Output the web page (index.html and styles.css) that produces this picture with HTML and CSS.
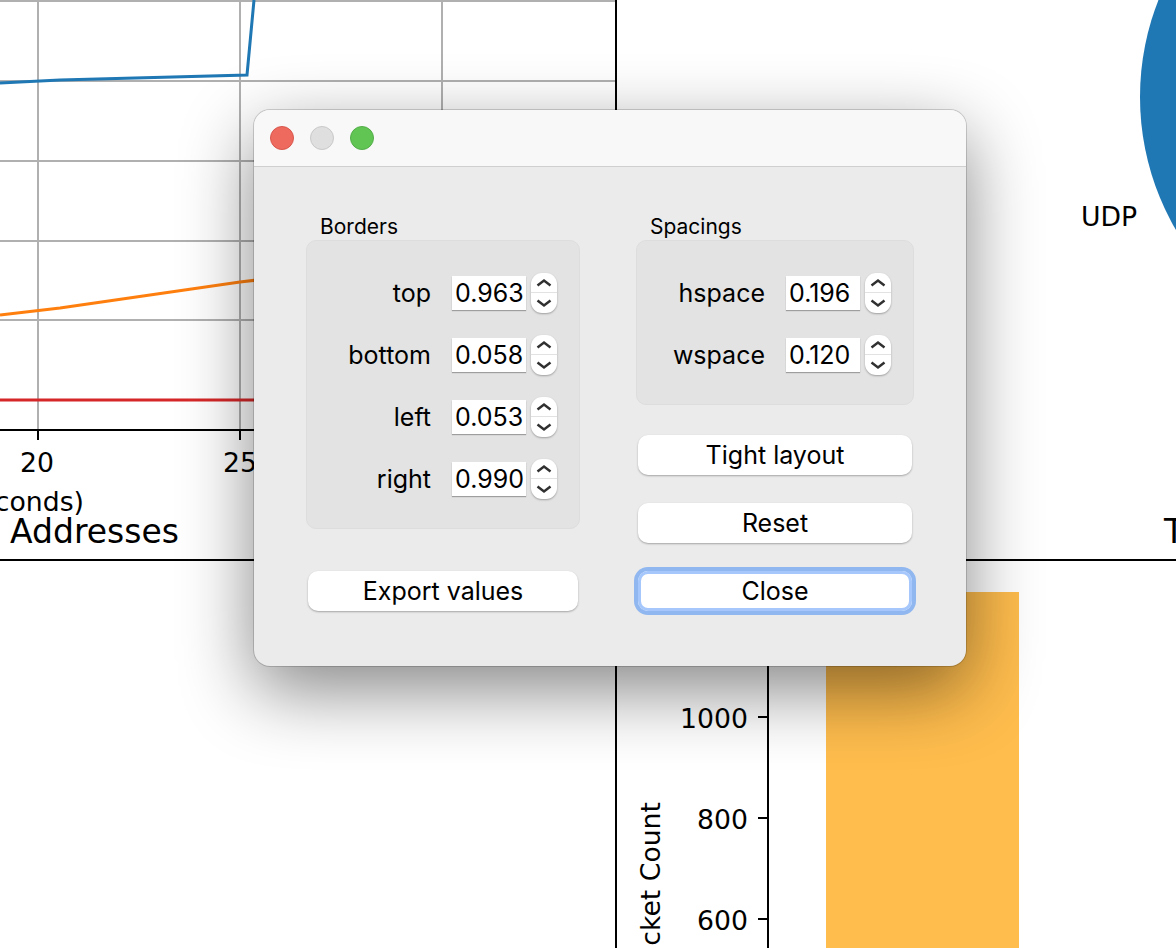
FILE: index.html
```html
<!DOCTYPE html>
<html lang="en">
<head>
    <meta charset="UTF-8">
    <meta name="viewport" content="width=device-width, initial-scale=1.0">
    <title>Subplot configuration</title>
    <link rel="stylesheet" href="styles.css">
</head>
<body>
    <!-- matplotlib figure behind the dialog -->
    <svg class="figure" width="1176" height="948" viewBox="0 0 1176 948">
        <g class="grid">
            <path d="M38 0V430M240 0V430M442 0V430"/>
            <path d="M0 1H615M0 81H615M0 161H615M0 241H615M0 320H615M0 400H615"/>
        </g>
        <polyline class="line-blue" points="0,83 60,80 247,75 254,0"/>
        <polyline class="line-orange" points="0,315 60,308 240,282 300,275"/>
        <polyline class="line-red" points="0,400 615,400"/>
        <path class="axis" d="M0 430H616M616 0V948M0 560H1176M768 560V948"/>
        <path class="axis" d="M38 430V440M240 430V440M758 717H768M758 818H768M758 919H768"/>
        <circle class="pie" cx="1404" cy="97" r="264"/>
        <rect class="bar" x="826" y="592" width="193" height="356"/>
        <text class="tick" x="37" y="472" text-anchor="middle">20</text>
        <text class="tick" x="240" y="472" text-anchor="middle">25</text>
        <text class="tick" x="84" y="511" text-anchor="end">conds)</text>
        <text class="title" x="10" y="543">Addresses</text>
        <text class="title" x="1164" y="543">T</text>
        <text class="tick" x="1081" y="226">UDP</text>
        <text class="tick" x="748" y="728" text-anchor="end">1000</text>
        <text class="tick" x="748" y="829" text-anchor="end">800</text>
        <text class="tick" x="748" y="930" text-anchor="end">600</text>
        <text class="tick" text-anchor="end" transform="translate(660,802) rotate(-90)">cket Count</text>
    </svg>

    <div class="dialog">
        <div class="titlebar">
            <span class="light light-red"></span>
            <span class="light light-grey"></span>
            <span class="light light-green"></span>
        </div>
        <div class="dialog-body">
            <div class="column">
                <div class="group-title">Borders</div>
                <div class="group group-borders">
                    <div class="row">
                        <span class="row-label">top</span>
                        <span class="spin-value">0.963</span>
                        <span class="stepper">
                            <svg width="26" height="40" viewBox="0 0 26 40"><path d="M6.5 12.5L13 7.5L19.500 12.5M6.500 27.500L13 32.500L19.500 27.500"/></svg>
                        </span>
                    </div>
                    <div class="row">
                        <span class="row-label">bottom</span>
                        <span class="spin-value">0.058</span>
                        <span class="stepper">
                            <svg width="26" height="40" viewBox="0 0 26 40"><path d="M6.5 12.5L13 7.5L19.500 12.5M6.500 27.500L13 32.500L19.500 27.500"/></svg>
                        </span>
                    </div>
                    <div class="row">
                        <span class="row-label">left</span>
                        <span class="spin-value">0.053</span>
                        <span class="stepper">
                            <svg width="26" height="40" viewBox="0 0 26 40"><path d="M6.5 12.5L13 7.5L19.500 12.5M6.500 27.500L13 32.500L19.500 27.500"/></svg>
                        </span>
                    </div>
                    <div class="row">
                        <span class="row-label">right</span>
                        <span class="spin-value">0.990</span>
                        <span class="stepper">
                            <svg width="26" height="40" viewBox="0 0 26 40"><path d="M6.5 12.5L13 7.5L19.500 12.5M6.500 27.500L13 32.500L19.500 27.500"/></svg>
                        </span>
                    </div>
                </div>
                <button class="push-button button-export">Export values</button>
            </div>
            <div class="column">
                <div class="group-title">Spacings</div>
                <div class="group">
                    <div class="row">
                        <span class="row-label">hspace</span>
                        <span class="spin-value">0.196</span>
                        <span class="stepper">
                            <svg width="26" height="40" viewBox="0 0 26 40"><path d="M6.5 12.5L13 7.5L19.500 12.5M6.500 27.500L13 32.500L19.500 27.500"/></svg>
                        </span>
                    </div>
                    <div class="row">
                        <span class="row-label">wspace</span>
                        <span class="spin-value">0.120</span>
                        <span class="stepper">
                            <svg width="26" height="40" viewBox="0 0 26 40"><path d="M6.5 12.5L13 7.5L19.500 12.5M6.500 27.500L13 32.500L19.500 27.500"/></svg>
                        </span>
                    </div>
                </div>
                <div class="button-stack">
                    <button class="push-button">Tight layout</button>
                    <button class="push-button">Reset</button>
                    <button class="push-button button-focus">Close</button>
                </div>
            </div>
        </div>
    </div>
</body>
</html>
```

FILE: styles.css
```css
body {
    margin: 0;
    width: 1176px;
    height: 948px;
    overflow: hidden;
    position: relative;
    background-color: #fff;
    font-family: Inter, "Liberation Sans", sans-serif;
    color: #000;
}

/* figure */
.figure {
    position: absolute;
    left: 0;
    top: 0;
    display: block;
}

.figure text {
    font-family: "DejaVu Sans", sans-serif;
    fill: #000;
}

.grid path {
    fill: none;
    stroke: #b0b0b0;
    stroke-width: 2;
}

.line-blue,
.line-orange,
.line-red {
    fill: none;
    stroke-width: 3;
}

.line-blue {
    stroke: #1f77b4;
}

.line-orange {
    stroke: #ff7f0e;
}

.line-red {
    stroke: #d62728;
}

.axis {
    fill: none;
    stroke: #000;
    stroke-width: 2;
}

.pie {
    fill: #1f77b4;
}

.bar {
    fill: #ffbd4d;
}

.tick {
    font-size: 26.700px;
}

.title {
    font-size: 33px;
}

/* dialog */
.dialog {
    position: absolute;
    left: 254px;
    top: 110px;
    width: 712px;
    height: 556px;
    box-sizing: border-box;
    background-color: #ebebeb;
    border-radius: 16px;
    box-shadow: 0 0 0 1px rgba(0, 0, 0, 0.16), 0 24px 72px rgba(0, 0, 0, 0.48);
    overflow: hidden;
}

.titlebar {
    display: flex;
    align-items: center;
    gap: 16px;
    height: 56px;
    padding-left: 16px;
    background-color: #f8f8f8;
    border-bottom: 1px solid #cfcfcf;
}

.light {
    width: 24px;
    height: 24px;
    box-sizing: border-box;
    border-radius: 50%;
    border: 1px solid;
}

.light-red {
    background-color: #ee6a5f;
    border-color: #d8574d;
}

.light-grey {
    background-color: #dfdfdf;
    border-color: #c8c8c8;
}

.light-green {
    background-color: #61c554;
    border-color: #54ad49;
}

.dialog-body {
    display: grid;
    grid-template-columns: 274px 278px;
    column-gap: 56px;
    padding: 47px 52px 0;
}

.group-title {
    height: 26px;
    padding-left: 14px;
    font-size: 21px;
    line-height: 26px;
}

.group {
    display: flex;
    flex-direction: column;
    gap: 22px;
    padding: 32px 22px 29px 0;
    background-color: #e3e3e3;
    border: 1px solid #dddddd;
    border-radius: 10px;
}

.row {
    display: flex;
    justify-content: flex-end;
    align-items: center;
    height: 40px;
}

.row-label {
    margin-right: 21px;
    font-size: 25px;
}

.spin-value {
    width: 74px;
    height: 34px;
    box-sizing: border-box;
    padding-left: 3px;
    margin-right: 5px;
    background-color: #fff;
    box-shadow: 0 1px 1px rgba(0, 0, 0, 0.3);
    font-size: 25px;
    line-height: 34px;
}

.stepper {
    position: relative;
    width: 26px;
    height: 40px;
    background-color: #fff;
    border-radius: 11px;
    box-shadow: 0 1px 2px rgba(0, 0, 0, 0.3);
}

.stepper svg {
    display: block;
    background: linear-gradient(#e2e2e2, #e2e2e2) 0 19px / 100% 1px no-repeat;
}

.stepper path {
    fill: none;
    stroke: #303030;
    stroke-width: 2.500;
}

.push-button {
    display: block;
    height: 40px;
    padding: 0;
    background-color: #fff;
    border: none;
    border-radius: 10px;
    box-shadow: 0 1px 2px rgba(0, 0, 0, 0.3);
    font-family: inherit;
    font-size: 25px;
    color: #000;
}

.button-export {
    width: 270px;
    margin: 42px 0 0 2px;
}

.button-stack {
    display: flex;
    flex-direction: column;
    gap: 28px;
    margin: 30px 2px 0;
}

.button-focus {
    box-shadow: 0 0 0 4px #90b7ef, inset 0 0 0 3px #a5c7fb;
}
```
